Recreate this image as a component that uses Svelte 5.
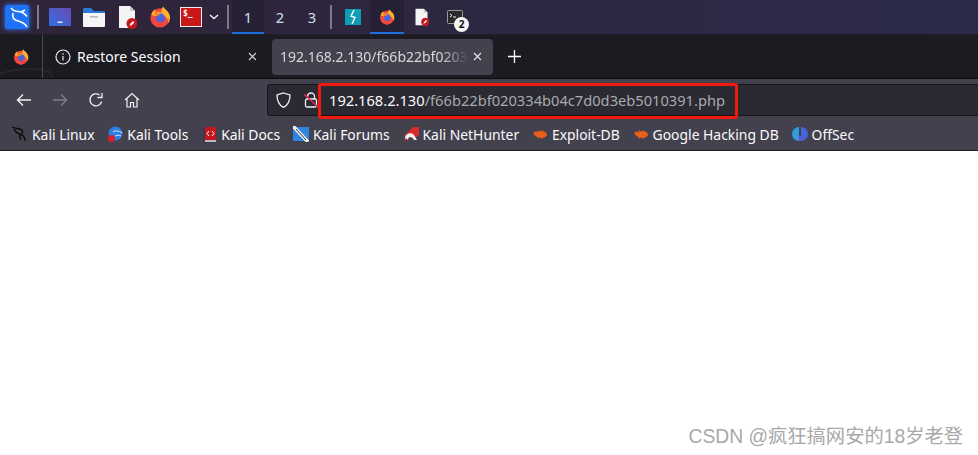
<script>
  const bookmarks = [
    { name: "Kali Linux", icon: "dragon" },
    { name: "Kali Tools", icon: "tools" },
    { name: "Kali Docs", icon: "docs" },
    { name: "Kali Forums", icon: "forums" },
    { name: "Kali NetHunter", icon: "nethunter" },
    { name: "Exploit-DB", icon: "bug" },
    { name: "Google Hacking DB", icon: "bug" },
    { name: "OffSec", icon: "offsec" },
  ];
</script>

{#snippet firefox(size)}
  <svg width={size} height={size} viewBox="0 0 24 24">
    <circle cx="12" cy="13" r="10.500" fill="#f0483e" />
    <path d="M2.500 9c1-3 3-4.500 4-5.500 0 2 1 3.500 2 3.500 2-1 4-1 5.500 0 -1-2 0-4.500 1.500-6.500 1 3 7.500 5 7.500 12.500 0 2-1 4-2 5.500 0-5-3-8-7-8-5 0-9 1.500-11.500-1.500z" fill="#ffb02e" />
    <circle cx="12.500" cy="13" r="5" fill="#4f63d8" />
    <path d="M2 12c2 4 5 6 10 6 4 0 7-1.500 9.500-4-1 5.500-5 9.500-10 9-5.500 0-9.500-5-9.500-11z" fill="#f0483e" />
    <path d="M6 5c1 3 3 4 7 4-2 1-4 2-5 1-2 0-3-2-2-5z" fill="#ff7a1e" />
  </svg>
{/snippet}

{#snippet doc(size)}
  <svg width={size} height={size * 1.2} viewBox="0 0 20 24">
    <path d="M2 1h11l5 5v17H2z" fill="#f4f4f4" />
    <path d="M13 1l5 5h-5z" fill="#c9c9c9" />
    <circle cx="15" cy="18.500" r="5.500" fill="#c8161d" />
    <path d="M12.500 21l1-2.500 2.500-2.500 1.400 1.400-2.500 2.500z" fill="#fff" />
  </svg>
{/snippet}

<div class="screen">
  <header class="panel">
    <div class="kali">
      <svg width="24" height="24" viewBox="0 0 24 24" fill="none" stroke="#fff" stroke-width="1.600">
        <path d="M6 3c2 2.500 4 3.500 7 3.500 3 0 6 1 9 5M8 8c-1 4 1 7 5 8 4 1 7 2 9 6M17 6.500l3-1.500" />
      </svg>
    </div>
    <span class="sep"></span>
    <div class="launchers">
      <svg width="22" height="18" viewBox="0 0 22 18">
        <defs>
          <linearGradient id="desk" x1="0" y1="1" x2="1" y2="0">
            <stop offset="0" stop-color="#2f6fe0" />
            <stop offset="1" stop-color="#6a4bb5" />
          </linearGradient>
        </defs>
        <rect width="22" height="18" rx="1" fill="url(#desk)" />
        <rect x="8.500" y="13.500" width="5" height="1.500" fill="#dfe6ff" />
      </svg>
      <svg width="22" height="20" viewBox="0 0 22 20">
        <path d="M0 2a1 1 0 0 1 1-1h7l3 3h10a1 1 0 0 1 1 1v3H0z" fill="#2a78d8" />
        <path d="M0 6h22v13a1 1 0 0 1-1 1H1a1 1 0 0 1-1-1z" fill="#f5f5f5" />
        <rect x="7" y="9" width="8" height="1.500" fill="#b5b5b5" />
      </svg>
      {@render doc(20)}
      {@render firefox(22)}
      <div class="term">$_</div>
      <svg class="chevron" width="10" height="6" viewBox="0 0 10 6" fill="none" stroke="#eee" stroke-width="1.500">
        <path d="M1 1l4 3.500L9 1" />
      </svg>
    </div>
    <span class="sep second"></span>
    <div class="desktops">
      <span class="on">1</span>
      <span>2</span>
      <span>3</span>
    </div>
    <span class="sep third"></span>
    <div class="apps">
      <div class="burp">
        <svg width="10" height="14" viewBox="0 0 10 14" fill="none" stroke="#fff" stroke-width="1.400">
          <path d="M6 0L3 6l4 1.500L4 14" />
        </svg>
      </div>
      <div class="app active">{@render firefox(16)}</div>
      <div class="app">{@render doc(15)}</div>
      <div class="app shell">
        <svg width="16" height="15" viewBox="0 0 16 15">
          <rect x=".5" y=".5" width="15" height="13" rx="1" fill="#2a2a2e" stroke="#999" />
          <path d="M3 4l2 1.500L3 7" fill="none" stroke="#eee" />
          <path d="M6 7h3" stroke="#eee" />
        </svg>
        <span class="badge">2</span>
      </div>
    </div>
  </header>

  <div class="tabs">
    <svg class="swoosh" width="60" height="16" viewBox="0 0 60 16" fill="none" stroke="#26262c" stroke-width="2">
      <path d="M0 12c15-6 35-7 50-2l3 6" />
    </svg>
    <div class="firefox-tab">{@render firefox(16)}</div>
    <div class="tab">
      <svg width="16" height="16" viewBox="0 0 16 16" fill="none" stroke="#e8e8ec" stroke-width="1.200">
        <circle cx="8" cy="8" r="7" />
        <path d="M8 7v4.500M8 4.300v1.400" />
      </svg>
      <span class="tab-title">Restore Session</span>
      <svg class="close" width="9" height="9" viewBox="0 0 9 9" stroke="#d8d8dc" stroke-width="1.100">
        <path d="M1 1l7 7M8 1l-7 7" />
      </svg>
    </div>
    <div class="tab current">
      <span class="tab-title fade">192.168.2.130/f66b22bf020334b04c7d0d3eb5010391.php</span>
      <svg class="close" width="9" height="9" viewBox="0 0 9 9" stroke="#e8e8ec" stroke-width="1.100">
        <path d="M1 1l7 7M8 1l-7 7" />
      </svg>
    </div>
    <svg class="plus" width="13" height="13" viewBox="0 0 13 13" stroke="#fbfbfe" stroke-width="1.300">
      <path d="M6.500 0v13M0 6.500h13" />
    </svg>
  </div>

  <div class="toolbar">
    <div class="nav">
      <svg width="16" height="14" viewBox="0 0 16 14" fill="none" stroke="#f0f0f4" stroke-width="1.300">
        <path d="M15 7H1.500M7 1.500L1.500 7 7 12.500" />
      </svg>
      <svg width="16" height="14" viewBox="0 0 16 14" fill="none" stroke="#80808a" stroke-width="1.300">
        <path d="M1 7h13.500M9 1.500L14.500 7 9 12.500" />
      </svg>
      <svg width="16" height="16" viewBox="0 0 16 16" fill="none" stroke="#f0f0f4" stroke-width="1.300">
        <path d="M13.700 9.500A6 6 0 1 1 11.500 3M14 1v4.500H9.500" />
      </svg>
      <svg width="16" height="16" viewBox="0 0 16 16" fill="none" stroke="#f0f0f4" stroke-width="1.200">
        <path d="M1 8l7-6.500L15 8M3 6.500V15h3.500v-4.500h3V15H13V6.500" />
      </svg>
    </div>
    <div class="urlbar">
      <svg width="15" height="16" viewBox="0 0 15 16" fill="none" stroke="#f0f0f4" stroke-width="1.300">
        <path d="M7.500 1L14 3c0 6-1.500 10-6.500 12.300C2.500 13 1 9 1 3z" />
      </svg>
      <svg class="lock" width="14" height="16" viewBox="0 0 14 16">
        <path d="M3.500 7V4.500a3.500 3.500 0 0 1 7 0V7" fill="none" stroke="#f0f0f4" stroke-width="1.300" />
        <rect x="1.500" y="7" width="11" height="8" rx="1.500" fill="none" stroke="#f0f0f4" stroke-width="1.300" />
        <path d="M0 2l14 13" stroke="#e22850" stroke-width="1.300" />
      </svg>
      <span class="url"><b>192.168.2.130</b>/f66b22bf020334b04c7d0d3eb5010391.php</span>
      <div class="highlight"></div>
    </div>
  </div>

  <div class="bookmarks">
    {#each bookmarks as b}
      <div class="bookmark">
        <svg width="16" height="16" viewBox="0 0 16 16">
          {#if b.icon === "dragon"}
            <path d="M0 1c3 2 6 1 8 2 3 1 3 3 2 5M2 3c1 3 3 4 6 5 3 1 5 3 5 7M8 9c-1 2 0 3 1 5" fill="none" stroke="#0c0c0c" stroke-width="1.400" />
          {:else if b.icon === "tools"}
            <circle cx="8.500" cy="7.500" r="7" fill="#2f7fe0" />
            <path d="M6 6c3-2 6-1 9 1M8 10c2-1 4-1 6 0" stroke="#dce9ff" fill="none" />
            <rect x="1" y="9" width="7" height="7" rx="3.500" fill="#d81e2c" />
          {:else if b.icon === "docs"}
            <rect x="2" y="1" width="13" height="13" fill="#c5161d" />
            <rect x="2" y="1" width="2" height="15" fill="#3a3a50" />
            <rect x="4" y="14" width="11" height="2" fill="#b9b9c4" />
            <path d="M8 5L6 7.500 8 10M11 5l2 2.500L11 10" stroke="#fff" fill="none" />
          {:else if b.icon === "forums"}
            <rect x="0" y="1" width="16" height="14" fill="#2e86de" />
            <path d="M0 0l15 16" stroke="#f2f2f2" stroke-width="3.500" />
            <path d="M3 3l10 11" stroke="#333" stroke-width="1" />
          {:else if b.icon === "nethunter"}
            <path d="M1 10L10 1h6v8l-4 3z" fill="#d92b2b" />
            <path d="M2 14c-1-6 6-9 9-5l3 5h-3c-2-4-6-4-6 0z" fill="#f3f3f3" />
            <path d="M1 15l4-1-2-2z" fill="#c22" />
          {:else if b.icon === "bug"}
            <ellipse cx="9" cy="8.500" rx="6" ry="3.500" fill="#e8611a" />
            <circle cx="3.500" cy="7.500" r="2" fill="#e8611a" />
            <path d="M6 4l2 2M10 4l1 2M6 13l2-2M10 13l1-2" stroke="#c9510f" />
          {:else}
            <path d="M7 1A7 7 0 0 0 7 15z" fill="#2f9be0" />
            <path d="M9 1A7 7 0 0 1 9 15z" fill="#3f67d8" />
            <path d="M7 10v5h2v-5z" fill="#8a3fd0" />
          {/if}
        </svg>
        <span>{b.name}</span>
      </div>
    {/each}
  </div>

  <main class="page">
    <span class="watermark">CSDN @疯狂搞网安的18岁老登</span>
  </main>
</div>

<style>
  :global(body) {
    margin: 0;
    background: #fff;
  }
  .screen {
    display: flex;
    flex-direction: column;
    width: 978px;
    height: 455px;
    overflow: hidden;
    font-family: "Noto Sans", "Noto Sans CJK SC", sans-serif;
  }

  .panel {
    display: flex;
    align-items: center;
    flex: none;
    box-sizing: border-box;
    height: 35px;
    background: linear-gradient(90deg, #2f2438, #2c2a4a);
    border-bottom: 1px solid #201e28;
  }
  .kali {
    display: flex;
    align-items: center;
    justify-content: center;
    width: 24px;
    height: 24px;
    margin-left: 5px;
    border-radius: 2px;
    background: #1d72f5;
    box-shadow: 0 0 5px #2b7cff;
  }
  .sep {
    width: 2px;
    height: 24px;
    margin-left: 8px;
    background: #7d7a88;
  }
  .launchers {
    display: flex;
    align-items: center;
    gap: 12px;
    margin-left: 10px;
  }
  .term {
    width: 20px;
    height: 18px;
    margin-left: -3px;
    border: 1px solid #eee;
    background: #c9181a;
    color: #fff;
    font: 700 8px/12px "DejaVu Sans Mono", monospace;
    text-indent: 2px;
  }
  .chevron {
    margin-left: -5px;
  }
  .sep.second {
    margin-left: 8px;
  }
  .desktops {
    display: flex;
    align-items: stretch;
    align-self: stretch;
    margin-left: 3px;
    font-size: 14.67px;
    color: #cfe0f5;
  }
  .desktops span {
    display: flex;
    align-items: center;
    justify-content: center;
    width: 32px;
  }
  .desktops .on {
    background: #252033;
    box-shadow: inset 0 -2px #1d6fe0;
  }
  .sep.third {
    margin-left: 2px;
  }
  .apps {
    display: flex;
    align-items: stretch;
    align-self: stretch;
    margin-left: 13px;
  }
  .burp {
    display: flex;
    align-items: center;
    justify-content: center;
    align-self: center;
    width: 16px;
    height: 16px;
    background: #0f9cb5;
  }
  .app {
    display: flex;
    align-items: center;
    justify-content: center;
    width: 34px;
  }
  .apps .active {
    margin-left: 9px;
    background: #252033;
    box-shadow: inset 0 -2px #1d6fe0;
  }
  .shell {
    position: relative;
    justify-content: flex-start;
    padding-left: 9px;
  }
  .badge {
    position: absolute;
    left: 16px;
    top: 17px;
    width: 15px;
    height: 15px;
    border-radius: 50%;
    background: #f5f5f5;
    color: #111;
    font-size: 10px;
    font-weight: 700;
    line-height: 15px;
    text-align: center;
  }

  .tabs {
    position: relative;
    display: flex;
    align-items: center;
    flex: none;
    height: 43px;
    background: #1c1b22;
  }
  .swoosh {
    position: absolute;
    left: 0;
    bottom: 0;
  }
  .firefox-tab {
    position: relative;
    display: flex;
    align-items: center;
    justify-content: center;
    width: 42px;
    height: 100%;
    border-right: 1px solid #4a4a50;
  }
  .tab {
    position: relative;
    display: flex;
    align-items: center;
    box-sizing: border-box;
    width: 228px;
    height: 36px;
    padding: 0 12px;
    color: #fbfbfe;
    font-size: 14px;
  }
  .tab-title {
    flex: 1;
    margin-left: 6px;
    overflow: hidden;
    white-space: nowrap;
  }
  .close {
    flex: none;
    margin-right: 2px;
  }
  .tab.current {
    width: 221px;
    margin-left: 1px;
    padding: 0 8px;
    border-radius: 4px;
    background: #42414d;
  }
  .current .tab-title {
    margin-left: 0;
    margin-right: 4px;
    color: #d8d8dc;
  }
  .current .close {
    margin-right: 3px;
  }
  .fade {
    -webkit-mask-image: linear-gradient(90deg, #000 85%, transparent);
    mask-image: linear-gradient(90deg, #000 85%, transparent);
  }
  .plus {
    margin-left: 15px;
  }

  .toolbar {
    display: flex;
    align-items: center;
    flex: none;
    height: 42px;
    background: #42414d;
    border-top: 1px solid #0c0c0d;
    box-sizing: border-box;
  }
  .nav {
    display: flex;
    align-items: center;
    gap: 20px;
    margin-left: 16px;
    width: 251px;
  }
  .urlbar {
    position: relative;
    display: flex;
    align-items: center;
    flex: 1;
    box-sizing: border-box;
    height: 32px;
    padding-left: 8px;
    border: 1px solid #16151c;
    border-right: 0;
    border-radius: 4px 0 0 4px;
    background: #2b2a33;
  }
  .lock {
    margin-left: 13px;
  }
  .url {
    margin-left: 11px;
    color: #a9a9ae;
    font-size: 14.67px;
    white-space: nowrap;
  }
  .url b {
    color: #fbfbfe;
    font-weight: 400;
  }
  .highlight {
    position: absolute;
    left: 50px;
    top: -2px;
    width: 414px;
    height: 30px;
    border: 3px solid #f01a0e;
    border-radius: 3px;
  }

  .bookmarks {
    display: flex;
    align-items: center;
    flex: none;
    gap: 12.8px;
    height: 31px;
    padding: 0 0 2px 12px;
    background: #42414d;
    border-bottom: 1px solid #1c1b22;
    box-sizing: border-box;
  }
  .bookmark {
    display: flex;
    align-items: center;
    gap: 4px;
    color: #fbfbfe;
    font-size: 13.9px;
  }

  .page {
    display: flex;
    flex: 1;
    align-items: flex-end;
    justify-content: flex-end;
    padding: 0 15px 6px 0;
    background: #fff;
  }
  .watermark {
    color: #a8a8a8;
    font-size: 19.3px;
    font-family: "Liberation Sans", "Noto Sans CJK SC", sans-serif;
  }
</style>
